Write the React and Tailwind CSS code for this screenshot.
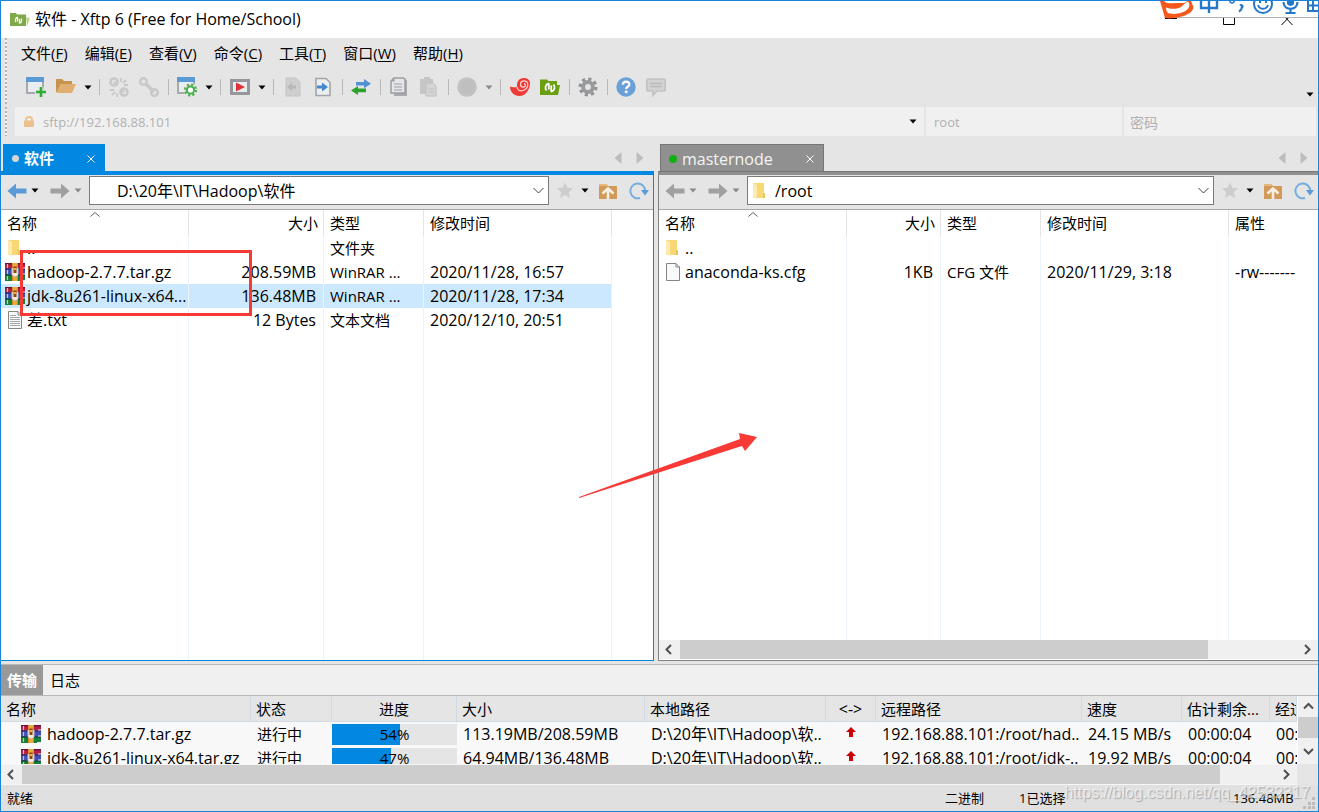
import React from "react";

const FONT = "font-['Open_Sans','Noto_Sans_CJK_SC',sans-serif]";

function Caret({ dim }) {
  return (
    <svg width="8" height="5" viewBox="0 0 8 5" aria-hidden="true">
      <path d="M0.5 0.5h7L4 4.5z" fill={dim ? "#8a8a8a" : "#000"} />
    </svg>
  );
}

function WindowBase() {
  return (
    <>
      <rect x="1" y="1" width="16" height="15" fill="#e9edf0" stroke="#a7a9ac" strokeWidth="2" />
      <rect x="0" y="0" width="18" height="5" fill="#5b9bd5" />
    </>
  );
}

const glyphs = {
  newSession: (
    <>
      <WindowBase />
      <path d="M9 15h11M15 10v10" stroke="#e5e5e5" strokeWidth="5" />
      <path d="M10 15h10M15 10v10" stroke="#2eae34" strokeWidth="2.600" />
    </>
  ),
  open: (
    <>
      <path d="M0 2h6l2 2h8v3H5L1 15H0z" fill="#c8924f" />
      <path d="M5 7h15l-4 9H0.500z" fill="#dfae70" />
    </>
  ),
  unlink: (
    <g fill="none" stroke="#c9c9c9">
      <circle cx="5" cy="5" r="3.500" strokeWidth="2.600" />
      <circle cx="15" cy="15" r="3.500" strokeWidth="2.600" />
      <path d="M12 1v4M17 3l-3 3M19 8h-4M1 13h4M3 18l3-3M8 20v-4" strokeWidth="1.800" />
      <path d="M5 5l3 3M12 12l3 3" strokeWidth="3" />
    </g>
  ),
  link: (
    <g fill="none" stroke="#c9c9c9">
      <circle cx="4.500" cy="4.500" r="3.300" strokeWidth="2.600" />
      <circle cx="15.500" cy="15.500" r="3.300" strokeWidth="2.600" />
      <path d="M6 6l9 9" strokeWidth="3.400" />
    </g>
  ),
  windowGear: (
    <>
      <WindowBase />
      <circle cx="13.500" cy="13" r="7" fill="#e5e5e5" />
      <circle cx="13.500" cy="13" r="5.400" fill="none" stroke="#4cb04f" strokeWidth="2.400" strokeDasharray="2.120 2.121" />
      <circle cx="13.500" cy="13" r="3.600" fill="#fff" stroke="#4cb04f" strokeWidth="2" />
    </>
  ),
  play: (
    <>
      <rect x="1.500" y="3.500" width="17" height="13" fill="#e9ecee" stroke="#95979b" strokeWidth="3" />
      <path d="M6 5.500l9 4.500-9 4.500z" fill="#e0313a" />
    </>
  ),
  docLeft: (
    <>
      <path d="M3 1h10l4 4v14H3z" fill="#cfcfcf" stroke="#c4c4c4" />
      <path d="M13 8.500H9V5.500L4 10l5 4.500v-3h4z" fill="#b9b9b9" />
    </>
  ),
  docRight: (
    <>
      <path d="M3 1.500h10l4 4v13H3z" fill="#eceef0" stroke="#a3a5a8" strokeWidth="1.600" />
      <path d="M4 8.500h5v-3l6 4.500-6 4.500v-3H4z" fill="#4287d0" />
    </>
  ),
  transfer: (
    <>
      <path d="M5 5h8V2l7 4.700-7 4.500V8.500H5z" fill="#5291d3" />
      <path d="M15 11.500H7V9l-7 4.500L7 18v-2.700h8z" fill="#2da12d" />
    </>
  ),
  copy: (
    <>
      <path d="M5 3h13v16H5z" fill="#a8aaad" />
      <path d="M5 1h9l2 1v14H2V4z" fill="#e4e6e8" stroke="#9b9da0" strokeWidth="1.500" />
      <path d="M2 4.500L5.500 1v3.500z" fill="#9b9da0" />
      <path d="M5 7h8M5 10h8M5 13h8" stroke="#9b9da0" strokeWidth="1.200" />
    </>
  ),
  paste: (
    <>
      <path d="M1 2h4V0h6v2h3v15H1z" fill="#c6c6c6" />
      <path d="M7 6h7l3 3v10H7z" fill="#d4d4d4" stroke="#c0c0c0" />
      <path d="M9 12h6M9 15h6" stroke="#c0c0c0" />
    </>
  ),
  circle: (
    <>
      <circle cx="10" cy="10" r="9.800" fill="#bfbfbf" />
      <circle cx="10" cy="10" r="8.300" fill="none" stroke="#c8c8c8" />
    </>
  ),
  shell: (
    <>
      <path d="M0 9.500c2 1 4.500 1 7 .2C6.500 4 9.500 1 14 1c3.800 0 6 2.200 6 5.500 0 6-4.500 12.500-10.500 12.500-5.500 0-9.500-4-9.500-9.500z" fill="#f03a35" />
      <path d="M7 9.700C7.200 13 10 14.500 13 13.500c3-1 4.800-3.300 4.800-6 0-2.300-1.700-3.700-3.700-3.700-2.200 0-3.600 1.500-3.600 3.400 0 1.700 1.200 2.900 2.700 2.900 1.300 0 2.200-.9 2.200-2 0-.9-.6-1.500-1.400-1.500" fill="none" stroke="#fbdad8" strokeWidth="1.200" />
    </>
  ),
  xftp: (
    <>
      <path d="M0 2.500h7l1.500 1.500H17v4h3l-2 10H0z" fill="#6a9f12" />
      <path d="M8.800 6.300A4.500 4.500 0 0 0 6.500 13.500M8.800 6.300V12.500M11.200 14.800A4.500 4.500 0 0 0 13.500 7.500M11.200 14.800V8.500" fill="none" stroke="#fff" strokeWidth="1.800" />
    </>
  ),
  gear: (
    <>
      <circle cx="10" cy="10" r="7.800" fill="none" stroke="#8f9194" strokeWidth="3.400" strokeDasharray="3.060 3.066" />
      <circle cx="10" cy="10" r="4.900" fill="none" stroke="#999b9e" strokeWidth="4" />
    </>
  ),
  help: (
    <>
      <circle cx="10" cy="10" r="9.700" fill="#6b9fd8" />
      <path d="M6.800 7.600C7 5.600 8.300 4.700 10.100 4.700c1.900 0 3.200 1 3.200 2.700 0 2.300-3.100 2.300-3.100 4.600" fill="none" stroke="#fff" strokeWidth="2.300" />
      <circle cx="10.200" cy="14.800" r="1.500" fill="#fff" />
    </>
  ),
  chat: (
    <>
      <path d="M2 2h16q1.200 0 1.200 1.200v9.600q0 1.200-1.200 1.200h-7l-4 4.500V14H2Q.8 14 .8 12.800V3.200Q.8 2 2 2z" fill="#d3d3d3" stroke="#c2c2c2" strokeWidth="1.600" />
      <path d="M4 6.500h12M4 9.500h12" stroke="#bababa" strokeWidth="1.400" />
    </>
  ),
};

const toolbar = [
  "newSession", "open", "caret", "sepWide", "unlink", "link", "sep", "windowGear", "caret", "sepWide",
  "play", "caret", "sepWide", "docLeft", "docRight", "sep", "transfer", "sep", "copy", "paste", "sep",
  "circle", "caretDim", "sepWide", "shell", "xftp", "sep", "gear", "sep", "help", "chat",
];

function ToolItem({ name }) {
  if (name === "sep" || name === "sepWide") {
    return (
      <span className={name === "sep" ? "flex w-2 shrink-0 justify-center" : "flex w-[10px] shrink-0 justify-center"}>
        <span className="h-4 w-px bg-[#b8b8b8]" />
      </span>
    );
  }
  if (name === "caret" || name === "caretDim") {
    return (
      <button aria-label="more" className="flex h-6 w-[13px] shrink-0 items-center justify-center">
        <Caret dim={name === "caretDim"} />
      </button>
    );
  }
  return (
    <button aria-label={name} className="flex h-6 w-[30px] shrink-0 items-center justify-center">
      <svg width="20" height="20" viewBox="0 0 20 20">{glyphs[name]}</svg>
    </button>
  );
}

function RarIcon() {
  return (
    <svg width="20" height="18" viewBox="0 0 20 18" className="shrink-0" aria-hidden="true">
      <rect x="0" y="0" width="20" height="6" fill="#b01f4e" />
      <rect x="0" y="0" width="20" height="1.500" fill="#6d1238" />
      <rect x="0" y="6" width="20" height="6" fill="#3b4fb4" />
      <rect x="0" y="5.500" width="20" height="1" fill="#20266e" />
      <rect x="0" y="12" width="20" height="6" fill="#14803c" />
      <rect x="0" y="11.500" width="20" height="1" fill="#0a3a2a" />
      <path d="M2.500 1v4M2.500 7v4M2.500 13v4" stroke="#f2c94a" strokeWidth="1.200" />
      <path d="M17 4.500h3v1h-3zM17 10.500h3v1h-3zM16 17h4v1h-4z" fill="#e9e2e8" />
      <rect x="7" y="0" width="6" height="18" fill="#d98420" />
      <path d="M7.500 1h5M8 3h4M8 15h4M8 17h4" stroke="#f9cf58" strokeWidth="1" />
      <path d="M7 5v6c0 1.500 1 2.500 3 2.500s3-1 3-2.500V5" fill="#f3ead9" stroke="#c9bfb4" />
      <rect x="8.500" y="3.500" width="3" height="6.500" fill="#8c451b" />
      <rect x="9" y="5" width="2" height="2" fill="#f2b13a" />
    </svg>
  );
}

function FolderIcon() {
  return (
    <svg width="14" height="18" viewBox="0 0 14 18" className="shrink-0" aria-hidden="true">
      <path d="M1 1h11v10l1 1v4H1z" fill="#f8d775" />
      <path d="M1 1l4 2v14l-4-1.500z" fill="#fdeab0" />
      <path d="M12 11v5" stroke="#dcae45" />
    </svg>
  );
}

function FileIcon({ lined }) {
  return (
    <svg width="16" height="18" viewBox="0 0 16 18" className="shrink-0" aria-hidden="true">
      <path d="M1.500 .5h9.500l3.500 3.500v13.500h-13z" fill="#f8f9fa" stroke="#858585" />
      <path d="M11 .5v3.500h3.500" fill="none" stroke="#858585" />
      {lined && <path d="M3 4.500h6M3 6.500h10M3 8.500h10M3 10.500h10M3 12.500h10M3 14.500h10" stroke="#a4a7aa" />}
    </svg>
  );
}

function NavArrow({ right, blue }) {
  return (
    <svg width="20" height="16" viewBox="0 0 20 16" aria-hidden="true">
      <path
        d={right ? "M19.500 8L11 .5v5H.5v5H11v5z" : "M.5 8L9 .5v5h10.500v5H9v5z"}
        fill={blue ? "#5b9bd5" : "#a0a0a0"}
      />
    </svg>
  );
}

function Chevron({ dir }) {
  const paths = {
    left: "M7 1L2.500 5.500L7 10",
    right: "M3 1l4.500 4.500L3 10",
    up: "M1 7.500L5.500 3L10 7.500",
    down: "M1 3l4.500 4.500L10 3",
  };
  return (
    <svg width="11" height="11" viewBox="0 0 11 11" aria-hidden="true">
      <path d={paths[dir]} fill="none" stroke="#505050" strokeWidth="2" />
    </svg>
  );
}

function TabArrows() {
  return (
    <div className="ml-auto flex gap-3 self-center pr-[10px]">
      <button aria-label="previous tab">
        <svg width="9" height="12" viewBox="0 0 9 12"><path d="M7.500 0v12L.5 6z" fill="#bdbdbd" /></svg>
      </button>
      <button aria-label="next tab">
        <svg width="9" height="12" viewBox="0 0 9 12"><path d="M1.500 0v12l7-6z" fill="#bdbdbd" /></svg>
      </button>
    </div>
  );
}

function PathBar({ path, folder, active }) {
  return (
    <div className="flex h-[35px] shrink-0 items-center border-b border-[#a8a8a8] bg-[#e5e5e5] pt-px pb-1 pl-[6px]">
      <div className="flex gap-[7px]">
        <div className="flex items-center">
          <button aria-label="back" className="flex w-5 justify-center"><NavArrow blue={active} /></button>
          <button aria-label="back history" className="flex w-4 justify-center"><Caret dim={!active} /></button>
        </div>
        <div className="flex items-center">
          <button aria-label="forward" className="flex w-5 justify-center"><NavArrow right /></button>
          <button aria-label="forward history" className="flex w-4 justify-center"><Caret dim /></button>
        </div>
      </div>
      <div className="ml-[3px] flex h-[29px] min-w-0 flex-1 items-center border border-[#7a7a7a] bg-white pr-1">
        <span className="flex w-[27px] shrink-0 pl-1">{folder && <FolderIcon />}</span>
        <select aria-label="path" className="h-full min-w-0 flex-1 appearance-none bg-transparent text-base outline-none">
          <option>{path}</option>
        </select>
        <svg width="11" height="7" viewBox="0 0 11 7" aria-hidden="true">
          <path d="M.5 1l5 5 5-5" fill="none" stroke="#404040" />
        </svg>
      </div>
      <button aria-label="favorites" className="ml-[6px] flex w-5 justify-center">
        <svg width="18" height="17" viewBox="0 0 18 17">
          <path d="M9 .5l2.300 5.200 5.700.6-4.200 3.900 1.200 5.800L9 13l-5 3 1.200-5.800L1 6.300l5.700-.6z" fill="#cdcdcd" />
        </svg>
      </button>
      <button aria-label="favorites list" className="flex w-5 justify-center"><Caret /></button>
      <button aria-label="parent folder" className="flex w-[26px] justify-center">
        <svg width="18" height="16" viewBox="0 0 18 16">
          <path d="M0 1h7l2 2h9v13H0z" fill="#d19a58" />
          <path d="M0 1h7l2 2H0z" fill="#e5b87c" />
          <path d="M3.500 10.500L9 5.500l5.500 5M9 7v9" fill="none" stroke="#f8efe4" strokeWidth="2.600" />
        </svg>
      </button>
      <button aria-label="refresh" className="flex w-8 justify-center pl-[3px]">
        <svg width="20" height="18" viewBox="0 0 20 18">
          <path d="M16.200 9A7.400 7.400 0 1 0 11 16" fill="none" stroke="#76addd" strokeWidth="2" />
          <path d="M12 8h8l-4 5.500z" fill="#5b9bd5" />
        </svg>
      </button>
    </div>
  );
}

const columnLine = "border-r border-[#edf3fb]";

function cellStyle(i, row) {
  if (i === 0) return "text-base";
  if (i === 1) return "pr-[7px] text-right text-base";
  if (i === 2) return "overflow-hidden pl-[6px] text-[15px]";
  return "pl-[6px] text-base";
}

function RowIcon({ kind }) {
  if (kind === "rar") return <span className="-ml-[2px] flex"><RarIcon /></span>;
  if (kind === "folder") return <FolderIcon />;
  return <FileIcon lined={kind === "text"} />;
}

function FileTable({ widths, headers, rows }) {
  return (
    <table className="h-full w-full table-fixed border-separate border-spacing-0 bg-white text-left">
      <colgroup>
        <col className={widths[0]} />
        <col className={widths[1]} />
        <col className={widths[2]} />
        <col className={widths[3]} />
        <col />
      </colgroup>
      <thead>
        <tr className="h-[26px]">
          {headers.map((h, i) => (
            <th
              key={i}
              className={
                "relative pr-[5px] pl-[6px] py-0 text-[15px] leading-6 font-normal whitespace-nowrap" +
                (i < 4 ? " border-r border-[#e3e3e3]" : "") +
                (i === 1 ? " text-right" : "")
              }
            >
              {h}
              {i === 0 && (
                <svg width="10" height="5" viewBox="0 0 10 5" className="absolute top-[2px] left-1/2 -translate-x-1/2" aria-hidden="true">
                  <path d="M.5 4.500L5 .5l4.500 4" fill="none" stroke="#606060" />
                </svg>
              )}
            </th>
          ))}
        </tr>
      </thead>
      <tbody>
        {rows.map((r, n) => (
          <tr key={n} className="h-6">
            {r.cells.map((c, i) => (
              <td
                key={i}
                className={
                  "p-0 leading-[22px] whitespace-nowrap " +
                  (i < 4 ? columnLine + " " : "") +
                  (r.selected && i < 4 ? "bg-[#cce8ff] " : "") +
                  cellStyle(i, r)
                }
              >
                {i === 0 ? (
                  <span className="flex items-center">
                    <span className="flex w-[26px] shrink-0 justify-start pl-[6px]"><RowIcon kind={r.icon} /></span>
                    <span>{c}</span>
                  </span>
                ) : c}
              </td>
            ))}
          </tr>
        ))}
        <tr>
          {headers.map((_, i) => <td key={i} className={"p-0 " + (i < 4 ? columnLine : "")} />)}
        </tr>
      </tbody>
    </table>
  );
}

const localRows = [
  { icon: "folder", cells: ["..", "", "文件夹", "", ""] },
  { icon: "rar", cells: ["hadoop-2.7.7.tar.gz", "208.59MB", "WinRAR ...", "2020/11/28, 16:57", ""] },
  { icon: "rar", selected: true, cells: ["jdk-8u261-linux-x64...", "136.48MB", "WinRAR ...", "2020/11/28, 17:34", ""] },
  { icon: "text", cells: ["差.txt", "12 Bytes", "文本文档", "2020/12/10, 20:51", ""] },
];

const remoteRows = [
  { icon: "folder", cells: ["..", "", "", "", ""] },
  { icon: "file", cells: ["anaconda-ks.cfg", "1KB", "CFG 文件", "2020/11/29, 3:18", "-rw-------"] },
];

function HScroll() {
  return (
    <div className="flex h-5 shrink-0 border-b border-white bg-[#f0f0f0]">
      <button aria-label="scroll left" className="flex w-[21px] items-center justify-center"><Chevron dir="left" /></button>
      <div className="flex flex-1"><div className="flex-[528_528_0%] bg-[#cdcdcd]" /><div className="flex-[89_89_0%]" /></div>
      <button aria-label="scroll right" className="flex w-[21px] items-center justify-center"><Chevron dir="right" /></button>
    </div>
  );
}

function CloseX() {
  return (
    <svg width="8" height="8" viewBox="0 0 8 8" aria-hidden="true">
      <path d="M.5 .5l7 7M7.500 .5l-7 7" stroke="#fff" />
    </svg>
  );
}

const menus = [
  ["文件", "F"], ["编辑", "E"], ["查看", "V"], ["命令", "C"], ["工具", "T"], ["窗口", "W"], ["帮助", "H"],
];

const gripDots = "w-[2px] bg-[repeating-linear-gradient(to_bottom,#b5b5b5_0px,#b5b5b5_2px,#f4f4f4_2px,#f4f4f4_4px)]";

const transferHeaders = ["名称", "状态", "进度", "大小", "本地路径", "<->", "远程路径", "速度", "估计剩余...", "经过"];

const transfers = [
  { name: "hadoop-2.7.7.tar.gz", pct: 54, size: "113.19MB/208.59MB", remote: "192.168.88.101:/root/had..", speed: "24.15 MB/s" },
  { name: "jdk-8u261-linux-x64.tar.gz", pct: 47, size: "64.94MB/136.48MB", remote: "192.168.88.101:/root/jdk-..", speed: "19.92 MB/s" },
];

function TransferTable() {
  const cell = "overflow-hidden p-0 pl-[6px] leading-[22px] whitespace-nowrap ";
  return (
    <table className="w-full min-w-[1296px] table-fixed border-separate border-spacing-0 text-left">
      <colgroup>
        <col className="w-[250px]" />
        <col className="w-[81px]" />
        <col className="w-[125px]" />
        <col className="w-[188px]" />
        <col className="w-[181px]" />
        <col className="w-[50px]" />
        <col className="w-[206px]" />
        <col className="w-[100px]" />
        <col className="w-[88px]" />
        <col />
      </colgroup>
      <thead>
        <tr className="h-[26px] bg-[#e5e5e5]">
          {transferHeaders.map((h, i) => (
            <th
              key={h}
              className={
                "overflow-hidden border-r border-b border-[#d0dae6] p-0 font-normal whitespace-nowrap leading-6 " +
                (i === 2 || i === 5 ? "text-center " : "pl-[5px] ") +
                (i === 5 ? "text-base" : "text-[15px]")
              }
            >
              {h}
            </th>
          ))}
        </tr>
      </thead>
      <tbody className="text-base">
        {transfers.map((t) => (
          <tr key={t.name} className="h-6">
            <td className={cell}>
              <span className="flex items-center gap-[6px] pl-[14px]"><RarIcon />{t.name}</span>
            </td>
            <td className={cell + "text-[15px]"}>进行中</td>
            <td className="p-0">
              <div className="relative mt-px h-[21px] bg-[#e5e5e5]">
                <div className="h-full bg-[#0288e0]" style={{ width: t.pct + "%" }} />
                <span className="absolute inset-0 text-center text-[15px] leading-5">{t.pct}%</span>
              </div>
            </td>
            <td className={cell}>{t.size}</td>
            <td className={cell}>D:\20年\IT\Hadoop\软..</td>
            <td className="p-0 pb-1">
              <svg width="10" height="10" viewBox="0 0 10 10" className="mx-auto" aria-hidden="true">
                <path d="M5 0l5 5H7v5H3V5H0z" fill="#cc0000" />
              </svg>
            </td>
            <td className={cell}>{t.remote}</td>
            <td className={cell}>{t.speed}</td>
            <td className={cell}>00:00:04</td>
            <td className={cell}>00:00:09</td>
          </tr>
        ))}
      </tbody>
    </table>
  );
}

function InputMethodBar() {
  return (
    <div className="absolute top-0 right-0 h-[17px] w-[158px]">
      <div className="ml-1 h-full border-b border-[#b0b0b0] bg-white" />
      <svg width="158" height="18" viewBox="0 0 158 18" className="absolute top-0 left-0" aria-hidden="true">
        <path d="M0 0h31l2.500 6c0 5-8 10-20 11-3 .5-6 .5-8.500 0z" fill="#f4581c" />
        <path d="M4 0h23c-1 2-3 2-6 2-5 0-9 .5-13 0C6 2 5 1 4 0z" fill="#fff" />
        <path d="M6 6.500c5 2 12 1.500 15-.5 2-1.500 3-3.500 7-5.500 3 4 1 8.500-6 11-6 2-12 1.500-14 .5C6.500 10.500 6 8.500 6 6.500z" fill="#fff" />
        <g fill="none" stroke="#2577c8" strokeWidth="2.400">
          <path d="M41 0v7h16V0M49 0v12" />
          <circle cx="72" cy="0" r="2" strokeWidth="1.500" />
          <path d="M80 4.500a1.500 1.500 0 1 1 1 2.500M82 5c0 3-1 4.500-3 5.500" strokeWidth="2" />
          <circle cx="103" cy="3" r="9" strokeWidth="2" />
          <path d="M98 4c1.500 5 8.500 5 10 0" strokeWidth="1.800" />
          <path d="M123.500 1c0 9 14 9 14 0M130.500 7v5M125.500 12h10" strokeWidth="2.200" />
          <path d="M148 0v10h10M148 4.500h10M153 0v10" strokeWidth="2" />
        </g>
        <path d="M99 0h2v2h-2zM105 0h2v2h-2zM127 0h7v3q-3.500 4-7 0z" fill="#2577c8" />
      </svg>
    </div>
  );
}

export default function App() {
  return (
    <div className={"relative flex h-screen flex-col overflow-hidden border border-[#1883d7] bg-[#e5e5e5] text-[15px] text-black " + FONT}>
      <header className="flex h-[37px] shrink-0 items-center bg-white pl-[9px]">
        <svg width="20" height="14" viewBox="0 0 20 14" aria-hidden="true">
          <path d="M0 0h6l1 1.500h9V13H0z" fill="#7faa4a" />
          <path d="M16 4l4 1.500-3 7.500z" fill="#bcd68e" />
          <path d="M7.500 4A3.600 3.600 0 0 0 5.800 9M7.500 4V8.500M9.500 10.500A3.600 3.600 0 0 0 11.200 5.500M9.500 10.500V6" fill="none" stroke="#fff" strokeWidth="1.300" />
        </svg>
        <h1 className="pb-[2px] pl-[5px] text-base leading-6">软件 - Xftp 6 (Free for Home/School)</h1>
        <div className="ml-auto flex h-full items-start gap-[46px] pt-3 pr-[25px]">
          <button aria-label="minimize"><svg width="12" height="13" viewBox="0 0 12 13"><path d="M0 5.500h12" stroke="#000" /></svg></button>
          <button aria-label="maximize"><svg width="12" height="13" viewBox="0 0 12 13"><path d="M.5 .5h11v11H.5z" fill="none" stroke="#000" /></svg></button>
          <button aria-label="close"><svg width="12" height="13" viewBox="0 0 12 13"><path d="M.5 .5l11 11.500M11.500 .5L.5 12" stroke="#000" /></svg></button>
        </div>
      </header>

      <div className="flex h-[66px] shrink-0 pl-1">
        <span className={gripDots} />
        <div className="flex min-w-0 flex-1 flex-col">
          <nav className="flex h-[30px] items-center gap-[17px] pl-[14px]">
            {menus.map(([label, key]) => (
              <button key={key} className="whitespace-nowrap">{label}(<u className="underline-offset-2">{key}</u>)</button>
            ))}
          </nav>
          <div className="mt-[2px] flex h-[34px] items-center pl-[14px]">
            {toolbar.map((n, i) => <ToolItem key={i} name={n} />)}
            <button aria-label="toolbar options" className="mt-[14px] mr-1 ml-auto"><Caret /></button>
          </div>
        </div>
      </div>

      <div className="mt-[3px] flex h-[30px] shrink-0 gap-[2px] pr-[2px] pb-px pl-1">
        <span className={gripDots} />
        <div className="ml-[6px] flex min-w-0 flex-1 items-center bg-[#f0f0f0] pr-[7px] pl-2">
          <svg width="12" height="12" viewBox="0 0 12 12" aria-hidden="true">
            <path d="M3 5V3.500a3 2.500 0 0 1 6 0V5" fill="none" stroke="#ebc48f" strokeWidth="2" />
            <rect x="1" y="4.500" width="10" height="6.500" rx="1" fill="#ebc08a" />
          </svg>
          <input aria-label="host" placeholder="sftp://192.168.88.101" className="ml-2 min-w-0 flex-1 bg-transparent pt-[2px] text-[13px] outline-none placeholder:text-[#b0b0b0]" />
          <button aria-label="host history"><Caret /></button>
        </div>
        <input aria-label="user" placeholder="root" className="w-[196px] bg-[#f0f0f0] pt-[2px] pl-2 text-[13px] outline-none placeholder:text-[#b0b0b0]" />
        <input aria-label="password" placeholder="密码" className="w-[192px] bg-[#f0f0f0] pt-[2px] pl-[6px] text-sm outline-none placeholder:text-[#b0b0b0]" />
      </div>

      <main className="mt-[7px] flex min-h-0 flex-1 gap-1">
        <section className="flex min-w-0 flex-[653_653_0%] flex-col">
          <div className="flex h-[27px] shrink-0 pl-[2px]">
            <div className="flex w-[102px] items-center bg-[#0288e0] pt-[2px] pr-[10px] pl-[9px] text-white">
              <span className="size-[7px] rounded-full bg-[#d5d5d5]" />
              <span className="pl-[5px] font-bold">软件</span>
              <button aria-label="close tab" className="ml-auto"><CloseX /></button>
            </div>
            <TabArrows />
          </div>
          <div className="h-1 shrink-0 bg-[#0288e0]" />
          <div className="flex min-h-0 flex-1 flex-col border-r border-b border-[#0288e0]">
            <PathBar path="D:\20年\IT\Hadoop\软件" active />
            <div className="min-h-0 flex-1">
              <FileTable
                widths={["w-[188px]", "w-[135px]", "w-[100px]", "w-[188px]"]}
                headers={["名称", "大小", "类型", "修改时间", ""]}
                rows={localRows}
              />
            </div>
          </div>
        </section>
        <section className="flex min-w-0 flex-[660_660_0%] flex-col">
          <div className="flex h-[27px] shrink-0 pl-[2px]">
            <div className="flex w-[164px] items-center border border-b-0 border-[#767676] bg-[#909090] pt-[2px] pr-[9px] pl-2 text-base text-[#f5f5f5]">
              <span className="size-2 rounded-full bg-[#10b010]" />
              <span className="pl-[5px]">masternode</span>
              <button aria-label="close tab" className="ml-auto"><CloseX /></button>
            </div>
            <TabArrows />
          </div>
          <div className="h-1 shrink-0 border-t border-[#767676] bg-[#909090]" />
          <div className="flex min-h-0 flex-1 flex-col border-b border-l border-[#828282]">
            <PathBar path="/root" folder />
            <div className="min-h-0 flex-1">
              <FileTable
                widths={["w-[188px]", "w-[94px]", "w-[100px]", "w-[188px]"]}
                headers={["名称", "大小", "类型", "修改时间", "属性"]}
                rows={remoteRows}
              />
            </div>
            <HScroll />
          </div>
        </section>
      </main>

      <section className="mt-[3px] shrink-0 border-t border-[#b8b8b8]">
        <div className="flex h-[31px] border-b border-[#b8b8b8] bg-[#f0f0f0]">
          <button className="w-[42px] bg-[#999999] font-bold text-white">传输</button>
          <button className="px-[7px]">日志</button>
        </div>
        <div className="flex h-[68px]">
          <div className="min-w-0 flex-1 overflow-hidden bg-[#f8f8f8]"><TransferTable /></div>
          <div className="flex w-[21px] flex-col border-l border-white bg-[#f0f0f0]">
            <button aria-label="scroll up" className="flex h-[21px] items-center justify-center"><Chevron dir="up" /></button>
            <div className="h-[21px] bg-[#cdcdcd]" />
            <button aria-label="scroll down" className="flex flex-1 items-center justify-center"><Chevron dir="down" /></button>
          </div>
        </div>
        <div className="flex h-[21px] pr-[21px]">
          <div className="flex flex-1 border-y border-[#f6f6f6] bg-[#f0f0f0]">
            <button aria-label="scroll left" className="flex w-[21px] items-center justify-center"><Chevron dir="left" /></button>
            <div className="flex-1 bg-[#cdcdcd]" />
            <button aria-label="scroll right" className="flex w-[77px] items-center justify-end pr-[5px]"><Chevron dir="right" /></button>
          </div>
        </div>
      </section>

      <footer className="flex h-[26px] shrink-0 items-center bg-[#e0e0e0] pt-[2px] pl-[6px] text-[13px]">
        <span>就绪</span>
        <span className="ml-auto w-[74px]">二进制</span>
        <span className="w-[214px]">1已选择</span>
        <span className="w-[70px]">136.48MB</span>
        <svg width="12" height="12" viewBox="0 0 12 12" className="mt-2 mr-[3px]" aria-hidden="true">
          <path d="M9 0h3v3H9zM5 5h3v3H5zM9 5h3v3H9zM0 9h3v3H0zM5 9h3v3H5zM9 9h3v3H9z" fill="#bcbcbc" />
        </svg>
      </footer>

      <InputMethodBar />
      <div className="pointer-events-none absolute top-[249px] left-[19px] h-[66px] w-[232px] border-[3px] border-[#f83a36]" />
      <svg width="180" height="68" viewBox="0 0 180 68" className="pointer-events-none absolute top-[431px] left-[578px]" aria-hidden="true">
        <path d="M0 65L161 7L160 1L178 5L166 19L163 14L0 66z" fill="#f83a36" />
      </svg>
      <p className="pointer-events-none absolute right-2 bottom-[6px] font-['Liberation_Sans',sans-serif] text-base leading-6 whitespace-nowrap text-white/60 [text-shadow:1px_1px_1px_rgba(0,0,0,0.25)]">
        https://blog.csdn.net/qq_42532317
      </p>
    </div>
  );
}
